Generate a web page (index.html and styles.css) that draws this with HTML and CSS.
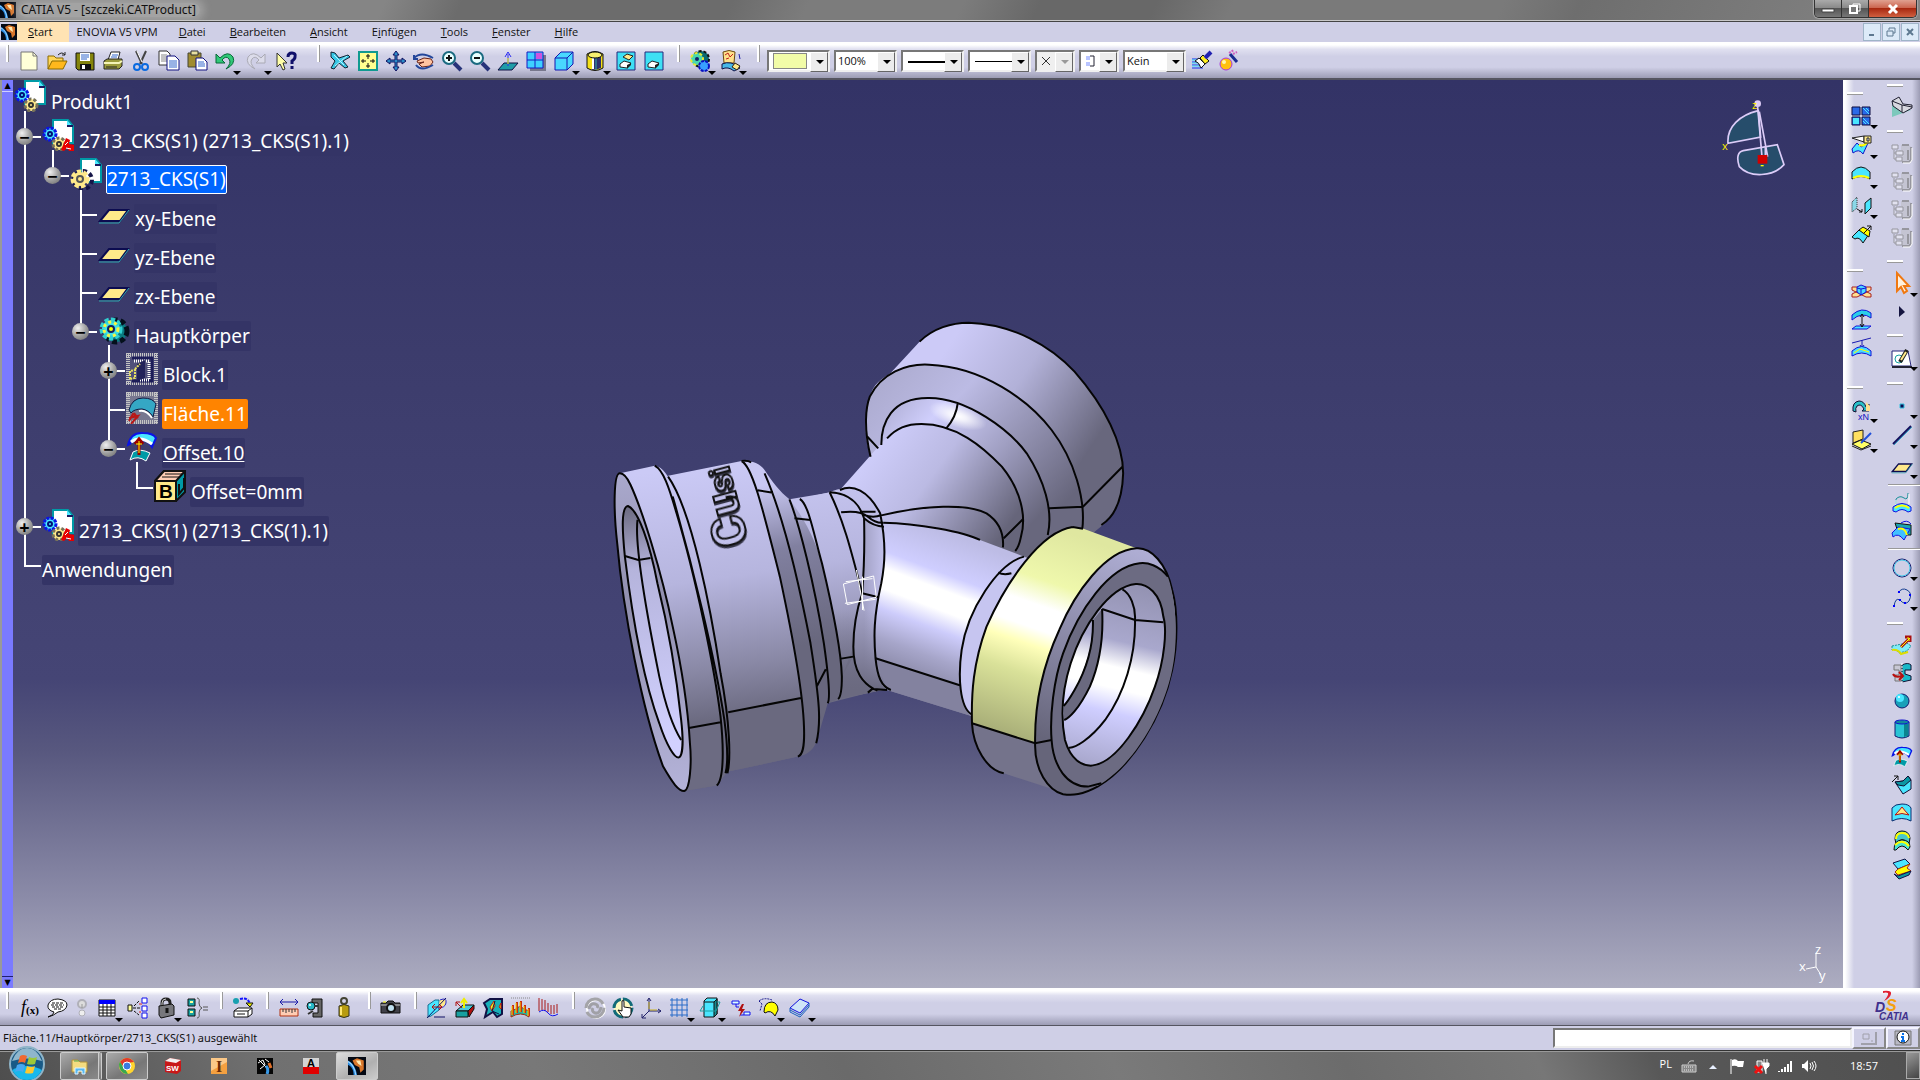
FILE: index.html
```html
<!DOCTYPE html>
<html lang="de">
<head>
    <meta charset="utf-8">
    <title>CATIA V5 - [szczeki.CATProduct]</title>
    <link rel="stylesheet" href="styles.css">
</head>
<body>
    <!-- shared symbols -->
    <svg class="defs" aria-hidden="true">
        <symbol id="catia" viewBox="0 0 16 16">
            <rect width="16" height="16" fill="#050a14"/>
            <path d="M0 3C4 5 7 9 8 16H5C5 11 3 8 0 7z" fill="#2a8be0"/>
            <path d="M0 4C4 6 6 10 7 16" stroke="#9fd8ff" fill="none"/>
            <path d="M4 3L8 1L14 3L14 11L11 14L10 9L6 7z" fill="#d9762a"/>
            <path d="M7 3L11 3L12 8L9 6z" fill="#ffe9b0"/>
        </symbol>
        <symbol id="doc" viewBox="0 0 32 32">
            <path d="M11 1H26L31 7V24H11z" fill="#fff" stroke="#009aa6" stroke-width="2"/>
            <path d="M25 1V8H31z" fill="#4de8ff"/>
            <path d="M25 7H31" stroke="#1a1a60" stroke-width="2"/>
        </symbol>
        <symbol id="product" viewBox="0 0 32 32">
            <use href="#doc"/>
            <circle cx="8" cy="15" r="6" fill="#49e6ff" stroke="#0a14e6" stroke-width="3" stroke-dasharray="3 1"/>
            <circle cx="8" cy="15" r="2" fill="#49e6ff" stroke="#00107a" stroke-width="2"/>
            <circle cx="17" cy="25" r="6" fill="#ffe98a" stroke="#77725a" stroke-width="3" stroke-dasharray="3 2"/>
            <circle cx="17" cy="25" r="2" fill="#ffe98a" stroke="#333" stroke-width="2"/>
        </symbol>
        <symbol id="component" viewBox="0 0 32 32">
            <use href="#product"/>
            <path d="M19 31L24 19L28 21L27 25L32 26V32H27L25 29L22 32z" fill="#e80000"/>
            <path d="M23 26L26 23M24 29L29 30" stroke="#fff" stroke-width="1"/>
        </symbol>
        <symbol id="part" viewBox="0 0 32 32">
            <use href="#doc"/>
            <circle cx="13" cy="22" r="9" fill="none" stroke="#151548" stroke-width="4" stroke-dasharray="4 3"/>
            <circle cx="10" cy="21" r="7" fill="#ffe98a" stroke="#ffe98a" stroke-width="5" stroke-dasharray="4 2"/>
            <circle cx="10" cy="21" r="3" fill="#ffe98a" stroke="#555" stroke-width="2"/>
        </symbol>
        <symbol id="plane" viewBox="0 0 32 32">
            <path d="M11 13H30L22 24H2z" fill="#ffe98a" stroke="#0c0c50" stroke-width="2"/>
            <path d="M1 26H21L31 13" fill="none" stroke="#2ea6ae"/>
        </symbol>
        <symbol id="offset" viewBox="0 0 32 32">
            <path d="M2 14Q5 1 17 2Q27 2 30 7L26 16Q22 9 15 9Q7 8 4 13z" fill="#49e6ff" stroke="#0a14e6" stroke-width="2"/>
            <path d="M5 11Q14 4 26 13" stroke="#fff" fill="none" stroke-width="3"/>
            <path d="M4 29L7 21Q14 17 24 22L20 30Q12 24 4 29z" fill="#009aa6" stroke="#fff"/>
            <path d="M13 24V9M9 13L13 8L17 13" stroke="#9c0000" stroke-width="3" fill="none"/>
            <path d="M13 22V10M10 13H16" stroke="#ff0"/>
        </symbol>
        <symbol id="cache" viewBox="0 0 22 22">
            <path d="M10 3H18L20 5V18L18 20H11V14H8V8H10z" fill="#c4c4d2"/>
            <path d="M11 20H18L20 18V5M11 3H18M17 8V18" fill="none" stroke="#96969e" stroke-width="2"/>
            <path d="M12 21H19L21 18V6" fill="none" stroke="#fff"/>
            <path d="M1 3H7V7H1zM5 9H12V13H5zM5 15H11V19H5zM3 8V17H5M3 11H5" fill="#e2e2f0" stroke="#96969e" stroke-width="1"/>
        </symbol>
    </svg>

    <header class="titlebar">
        <svg class="app-icon"><use href="#catia"/></svg>
        <span class="title">CATIA V5 - [szczeki.CATProduct]</span>
        <div class="window-buttons">
            <button class="min" aria-label="Minimieren"><svg viewBox="0 0 14 12"><path d="M1 6H13V9H1z" fill="#fff" stroke="#444"/></svg></button>
            <button class="max" aria-label="Wiederherstellen"><svg viewBox="0 0 14 12"><path d="M5 1H12V8H5z" fill="none" stroke="#fff" stroke-width="1"/><path d="M2 3H9V10H2z" fill="#777" stroke="#fff" stroke-width="2"/></svg></button>
            <button class="close" aria-label="Schließen"><svg viewBox="0 0 14 12"><path d="M3 2L11 10M11 2L3 10" stroke="#fff" stroke-width="3"/></svg></button>
        </div>
    </header>

    <nav class="menubar">
        <svg class="app-icon"><use href="#catia"/></svg>
        <button class="active"><u>S</u>tart</button>
        <button class="vpm">ENOVIA V5 VPM</button>
        <button><u>D</u>atei</button>
        <button><u>B</u>earbeiten</button>
        <button><u>A</u>nsicht</button>
        <button>E<u>i</u>nfügen</button>
        <button><u>T</u>ools</button>
        <button><u>F</u>enster</button>
        <button><u>H</u>ilfe</button>
        <div class="mdi-buttons">
            <button aria-label="Minimieren"><svg viewBox="0 0 12 12"><path d="M3 9H8" stroke="#5d7890" stroke-width="2"/></svg></button>
            <button aria-label="Wiederherstellen"><svg viewBox="0 0 12 12"><path d="M4 4V2H10V7H8M2 5H8V10H2z" fill="none" stroke="#5d7890" stroke-width="1"/></svg></button>
            <button aria-label="Schließen"><svg viewBox="0 0 12 12"><path d="M3 3L9 9M9 3L3 9" stroke="#5d7890" stroke-width="2"/></svg></button>
        </div>
    </nav>

    <div class="toolbar">
        <i class="grip"></i>
        <button class="tool" aria-label="Neu"><svg viewBox="0 0 22 22"><path d="M3 2H15L19 6V20H3z" fill="#ffffd8" stroke="#777"/><path d="M15 2V6H19" fill="none" stroke="#777"/></svg></button>
        <button class="tool" aria-label="Öffnen"><svg viewBox="0 0 22 22"><path d="M2 19V6H8L10 8H17V11" fill="#ffd75a" stroke="#8a6a00"/><path d="M2 19L6 11H21L17 19z" fill="#ffb81c" stroke="#8a6a00"/><path d="M12 5Q16 1 19 5M19 2V5H16" fill="none" stroke="#222"/></svg></button>
        <button class="tool" aria-label="Sichern"><svg viewBox="0 0 22 22"><path d="M2 3H20V20H4L2 18z" fill="#84840c" stroke="#111"/><path d="M6 3H16V11H6z" fill="#fff"/><path d="M7 5H15M7 7H15M7 9H13" stroke="#36c"/><path d="M6 14H17V20H6z" fill="#111"/><path d="M8 15H11V19H8z" fill="#fff"/></svg></button>
        <button class="tool" aria-label="Drucken"><svg viewBox="0 0 22 22"><path d="M6 10L9 2H18L16 10z" fill="#fff" stroke="#222"/><path d="M10 5H16M9 7H15" stroke="#36c"/><path d="M2 11L5 9H20V16L17 19H2z" fill="#9c9c3c" stroke="#222"/><path d="M2 13H17L20 11" fill="none" stroke="#f4f4b8" stroke-width="2"/><path d="M4 17H15" stroke="#222"/></svg></button>
        <button class="tool" aria-label="Ausschneiden"><svg viewBox="0 0 22 22"><path d="M6 1L12 14M16 1L10 14" stroke="#444" stroke-width="2"/><path d="M7 1L12 12" stroke="#fff"/><circle cx="7" cy="17" r="3" fill="none" stroke="#0a6ae0" stroke-width="2"/><circle cx="15" cy="17" r="3" fill="none" stroke="#0a6ae0" stroke-width="2"/></svg></button>
        <button class="tool" aria-label="Kopieren"><svg viewBox="0 0 22 22"><path d="M1 1H9L12 4V15H1z" fill="#fff" stroke="#333"/><path d="M3 5H9M3 7H9M3 9H9M3 11H9" stroke="#888"/><path d="M9 6H17L21 10V20H9z" fill="#fff" stroke="#111180"/><path d="M11 11H19M11 13H19M11 15H19M11 17H19" stroke="#36c"/></svg></button>
        <button class="tool" aria-label="Einfügen"><svg viewBox="0 0 22 22"><path d="M2 3H15V17H2z" fill="#a08c30" stroke="#443"/><path d="M5 1H12V5H5z" fill="#e8e0a0" stroke="#333"/><path d="M10 8H17L21 12V20H10z" fill="#fff" stroke="#111180"/><path d="M12 12H18M12 14H19M12 16H19" stroke="#36c"/></svg></button>
        <button class="tool more" aria-label="Widerrufen"><svg viewBox="0 0 22 22"><path d="M2 4V13H11L8 10Q12 5 15 9Q18 13 12 19Q22 14 19 7Q14 0 6 8z" fill="#30c878" stroke="#086838"/></svg></button>
        <button class="tool more" aria-label="Wiederholen"><svg viewBox="0 0 22 22"><path d="M20 4V13H11L14 10Q10 5 7 9Q4 13 10 19Q0 14 3 7Q8 0 16 8z" fill="#dcdcea" stroke="#aaaab4"/></svg></button>
        <button class="tool" aria-label="Direkthilfe"><svg viewBox="0 0 22 22"><path d="M1 3V17L4 14L7 20L9 19L7 13H11z" fill="#ffffa8" stroke="#333"/><path d="M12 7Q12 3 16 3Q20 3 19 7Q19 9 16 11V14M16 16V19" fill="none" stroke="#10106a" stroke-width="3"/></svg></button>
        <i class="grip wide"></i>
        <button class="tool" aria-label="Fliegen"><svg viewBox="0 0 22 22"><path d="M2 2L6 3L10 8L19 5L21 7L14 11L19 17L16 18L10 13L5 19L2 18L6 11L2 7z" fill="#39c7e6" stroke="#123"/><path d="M5 5L15 15M18 6L6 16" stroke="#b8f4ff"/></svg></button>
        <button class="tool" aria-label="Alles einpassen"><svg viewBox="0 0 22 22"><path d="M2 2H20V20H2z" fill="#ffff90" stroke="#109a90" stroke-width="2"/><path d="M11 4V9M9 6H13M11 18V13M9 16H13M4 11H9M6 9V13M18 11H13M16 9V13" stroke="#111" stroke-width="1"/></svg></button>
        <button class="tool" aria-label="Verschieben"><svg viewBox="0 0 22 22"><path d="M11 1L14 5H12V10H17V8L21 11L17 14V12H12V17H14L11 21L8 17H10V12H5V14L1 11L5 8V10H10V5H8z" fill="#2c8cc8" stroke="#101060"/></svg></button>
        <button class="tool" aria-label="Drehen"><svg viewBox="0 0 22 22"><path d="M4 11L11 8L18 9L20 12L17 16L9 17L6 14L11 12L5 13z" fill="#ffc3a0" stroke="#6a2418"/><path d="M1 5V9H5M1 8Q8 1 20 8M3 15Q8 22 20 15" fill="none" stroke="#23469a" stroke-width="2"/></svg></button>
        <button class="tool" aria-label="Vergrößern"><svg viewBox="0 0 22 22"><path d="M13 13L20 20" stroke="#27337a" stroke-width="4"/><circle cx="8" cy="8" r="6" fill="#e8ffff" stroke="#1a6a80" stroke-width="2"/><path d="M5 8H11M8 5V11" stroke="#111" stroke-width="2"/></svg></button>
        <button class="tool" aria-label="Verkleinern"><svg viewBox="0 0 22 22"><path d="M13 13L20 20" stroke="#27337a" stroke-width="4"/><circle cx="8" cy="8" r="6" fill="#e8ffff" stroke="#1a6a80" stroke-width="2"/><path d="M5 8H11" stroke="#111" stroke-width="2"/></svg></button>
        <button class="tool" aria-label="Senkrechte Ansicht"><svg viewBox="0 0 22 22"><path d="M7 13H21L15 20H1z" fill="#1e9ca8" stroke="#114"/><path d="M11 16V4M8 7L11 2L14 7" fill="none" stroke="#2a2af0"/><path d="M11 14V8" stroke="#ff0"/></svg></button>
        <button class="tool" aria-label="Mehrfachansicht"><svg viewBox="0 0 22 22"><path d="M5 5H21V21H5z" fill="#77778c"/><path d="M2 2H18V18H2z" fill="#3ed0ff" stroke="#1818c0"/><path d="M11 3H17V9H11z" fill="#cc54e0"/><path d="M2 10H18M10 2V18" stroke="#1818c0" stroke-width="1"/></svg></button>
        <button class="tool more" aria-label="Isometrische Ansicht"><svg viewBox="0 0 22 22"><path d="M2 8L8 2H20V14L14 20H2z" fill="#49d8ff" stroke="#1515b0"/><path d="M2 8H14V20M14 8L20 2" fill="none" stroke="#1515b0"/></svg></button>
        <button class="tool more" aria-label="Schattierung"><svg viewBox="0 0 22 22"><path d="M3 4V18Q11 23 19 18V4Q11 -1 3 4z" fill="#f4e018" stroke="#111"/><path d="M8 7H17V18Q13 20 8 20z" fill="#30306c"/><path d="M9 8V19" stroke="#fff" stroke-width="2"/><path d="M12 8V20" stroke="#3aa"/><ellipse cx="11" cy="5" rx="7" ry="3" fill="#f8f070" stroke="#111"/></svg></button>
        <button class="tool" aria-label="Verdecken/Anzeigen"><svg viewBox="0 0 22 22"><path d="M2 2H20V20H2z" fill="#3ee0f4" stroke="#27277a"/><path d="M8 7L12 4L18 6L14 10z" fill="#ffe98a" stroke="#222"/><path d="M5 14L9 11L16 13L12 18L5 17z" fill="#fff" stroke="#222"/><path d="M12 15L16 13V15L12 19z" fill="#222"/></svg></button>
        <button class="tool" aria-label="Sichtbaren Raum umschalten"><svg viewBox="0 0 22 22"><path d="M2 2H20V20H2z" fill="#3ee0f4" stroke="#27277a"/><path d="M5 14L9 11L16 13L12 18L5 17z" fill="#fff" stroke="#222"/><path d="M12 15L16 13V15L12 19z" fill="#222"/></svg></button>
        <i class="grip"></i>
        <button class="tool more" aria-label="Arbeitsumgebung"><svg viewBox="0 0 22 22"><circle cx="12" cy="9" r="8" fill="#0a6a70" stroke="#111" stroke-width="2" stroke-dasharray="3 2"/><circle cx="8" cy="9" r="6" fill="#48d8b0" stroke="#e8e830" stroke-width="2" stroke-dasharray="3 2"/><circle cx="8" cy="9" r="2" fill="#126"/><circle cx="15" cy="16" r="5" fill="#38a0ff" stroke="#0a10c0" stroke-width="2" stroke-dasharray="3 1"/></svg></button>
        <button class="tool more" aria-label="Katalog"><svg viewBox="0 0 22 22"><path d="M3 2Q9 -1 15 2L14 13H4z" fill="#ffe08a" stroke="#6a4a10"/><path d="M5 5L8 3L10 7L13 4M6 9L9 8" stroke="#c02020" fill="none"/><path d="M2 14Q11 10 20 18L14 21Q8 16 2 19z" fill="#48b8e8" stroke="#114"/><path d="M15 13L20 16L17 20L12 17z" fill="#ffe98a" stroke="#321"/><path d="M19 4L20 9" stroke="#22a"/></svg></button>
        <i class="grip"></i>
        <div class="combos">
            <div class="combo"><select aria-label="Farbe"><option></option></select><span class="swatch"></span></div>
            <div class="combo"><select aria-label="Transparenz"><option>100%</option></select></div>
            <div class="combo"><select aria-label="Linienstärke"><option></option></select><span class="line thick"></span></div>
            <div class="combo"><select aria-label="Linientyp"><option></option></select><span class="line"></span></div>
            <div class="combo small off"><select aria-label="Punktsymbol" disabled><option></option></select><svg class="mark" viewBox="0 0 12 12"><path d="M2 2L10 10M10 2L2 10" stroke="#333"/></svg></div>
            <div class="combo small"><select aria-label="Wiedergabe"><option></option></select><svg class="mark" viewBox="0 0 12 12"><path d="M2 1H6V5H2zM2 7H6V11H2z" fill="#b8c4ff"/><path d="M6 1H10V11H6" fill="none" stroke="#223"/></svg></div>
            <div class="combo"><select aria-label="Layer"><option>Kein</option></select></div>
        </div>
        <button class="tool" aria-label="Format übertragen"><svg viewBox="0 0 22 22"><path d="M1 9H12M1 12H12M1 15H12M1 18H12" stroke="#1030f0" stroke-width="1"/><path d="M1 10H12M1 13H12M1 16H12" stroke="#40e0f0"/><path d="M8 8L14 14L10 18Q8 12 4 11z" fill="#fff" stroke="#111"/><path d="M9 8L12 5L18 11L14 14z" fill="#ffee20" stroke="#111"/><path d="M14 8L20 2" stroke="#2020b0" stroke-width="4"/></svg></button>
        <button class="tool" aria-label="Material"><svg viewBox="0 0 22 22"><circle cx="7" cy="14" r="6" fill="#ffc010" stroke="#a838e0"/><circle cx="5" cy="12" r="2" fill="#fff6b0"/><path d="M11 4L18 12" stroke="#1a2a90" stroke-width="3"/><path d="M10 3L15 0M14 4L18 2" stroke="#d060c0" stroke-width="2" stroke-dasharray="2 1"/></svg></button>
    </div>

    <main class="workspace">
        <section class="viewport">
            <div class="scroller"><button aria-label="Nach oben">▲</button><button aria-label="Nach unten">▼</button></div>
            <svg class="scene" viewBox="0 80 1843 908">
                <defs>
                    <linearGradient id="flangeTop" gradientUnits="userSpaceOnUse" x1="880" y1="160" x2="1290" y2="400"><stop offset="0" stop-color="#cccaf7"/><stop offset=".45" stop-color="#b2b1d8"/><stop offset="1" stop-color="#68677d"/></linearGradient>
                    <linearGradient id="ring" gradientUnits="userSpaceOnUse" x1="760" y1="200" x2="1230" y2="560"><stop offset="0" stop-color="#aeadd2"/><stop offset=".3" stop-color="#bcbbe4"/><stop offset="1" stop-color="#67667c"/></linearGradient>
                    <linearGradient id="fillet" gradientUnits="userSpaceOnUse" x1="760" y1="300" x2="1160" y2="600"><stop offset="0" stop-color="#b5b4dc"/><stop offset=".2" stop-color="#d0cffc"/><stop offset=".6" stop-color="#a09fc2"/><stop offset="1" stop-color="#68677d"/></linearGradient>
                    <linearGradient id="neck" gradientUnits="userSpaceOnUse" x1="740" y1="390" x2="1090" y2="610"><stop offset="0" stop-color="#cdccf9"/><stop offset=".4" stop-color="#bbbae3"/><stop offset="1" stop-color="#66657a"/></linearGradient>
                    <linearGradient id="body" gradientUnits="userSpaceOnUse" x1="300" y1="460" x2="420" y2="1210"><stop offset="0" stop-color="#cbcaf6"/><stop offset=".45" stop-color="#b6b5de"/><stop offset=".8" stop-color="#8988a5"/><stop offset="1" stop-color="#6b6a80"/></linearGradient>
                    <linearGradient id="joint" gradientUnits="userSpaceOnUse" x1="690" y1="0" x2="745" y2="0"><stop offset="0" stop-color="#a3a2c6"/><stop offset="1" stop-color="#c4c3ee"/></linearGradient>
                    <linearGradient id="jointShade" gradientUnits="userSpaceOnUse" x1="0" y1="900" x2="0" y2="1140"><stop offset="0" stop-color="#6b6a80" stop-opacity="0"/><stop offset="1" stop-color="#6b6a80"/></linearGradient>
                    <linearGradient id="band" gradientUnits="userSpaceOnUse" x1="450" y1="520" x2="560" y2="1000"><stop offset="0" stop-color="#c9c8f3"/><stop offset=".4" stop-color="#8180a0"/><stop offset="1" stop-color="#68677d"/></linearGradient>
                    <linearGradient id="disc" gradientUnits="userSpaceOnUse" x1="60" y1="500" x2="200" y2="1440"><stop offset="0" stop-color="#a9a8cc"/><stop offset=".4" stop-color="#918fae"/><stop offset="1" stop-color="#b4b3d9"/></linearGradient>
                    <linearGradient id="bore" gradientUnits="userSpaceOnUse" x1="80" y1="600" x2="180" y2="1300"><stop offset="0" stop-color="#706f86"/><stop offset=".25" stop-color="#b5b4dc"/><stop offset="1" stop-color="#d2d1ff"/></linearGradient>
                    <linearGradient id="pipe" gradientUnits="userSpaceOnUse" x1="900" y1="665" x2="710" y2="1105"><stop offset="0" stop-color="#bdbce5"/><stop offset=".24" stop-color="#cfceff"/><stop offset=".34" stop-color="#fff"/><stop offset=".46" stop-color="#fff"/><stop offset=".58" stop-color="#cdccfb"/><stop offset=".75" stop-color="#a6a5c9"/><stop offset="1" stop-color="#7b7a95"/></linearGradient>
                    <linearGradient id="yellow" gradientUnits="userSpaceOnUse" x1="1280" y1="690" x2="1050" y2="1270"><stop offset="0" stop-color="#dfe7a0"/><stop offset=".25" stop-color="#eff8ac"/><stop offset=".37" stop-color="#fff"/><stop offset=".48" stop-color="#fff"/><stop offset=".56" stop-color="#ffffba"/><stop offset=".7" stop-color="#d9e199"/><stop offset="1" stop-color="#a8ae78"/></linearGradient>
                    <linearGradient id="hole" gradientUnits="userSpaceOnUse" x1="1400" y1="830" x2="1250" y2="1370"><stop offset="0" stop-color="#9493b3"/><stop offset=".3" stop-color="#a9a8cd"/><stop offset=".44" stop-color="#fff"/><stop offset=".55" stop-color="#fff"/><stop offset=".68" stop-color="#cfceff"/><stop offset="1" stop-color="#a5a4c8"/></linearGradient>
                    <linearGradient id="rim" gradientUnits="userSpaceOnUse" x1="1420" y1="730" x2="1200" y2="1300"><stop offset="0" stop-color="#aeadd3"/><stop offset=".5" stop-color="#8b8aa8"/><stop offset="1" stop-color="#66657a"/></linearGradient>
                    <radialGradient id="glow"><stop offset="0" stop-color="#fff"/><stop offset=".3" stop-color="#fff" stop-opacity=".8"/><stop offset="1" stop-color="#fff" stop-opacity="0"/></radialGradient>
                </defs>

                <g class="model" transform="translate(600 310) scale(.3827 .3333)">
                    <!-- rear flange -->
                    <path fill="url(#flangeTop)" d="M707 440C690 380 690 310 705 260C715 220 735 208 760 188L835 95C870 55 920 38 963 38C1080 42 1180 110 1240 185C1320 290 1367 400 1367 490C1365 570 1345 620 1292 665L1200 760L900 700z"/>
                    <path fill="url(#ring)" d="M707 440C688 350 695 290 705 260C735 190 800 160 860 164C1000 170 1120 270 1180 360C1240 450 1270 570 1260 660L1100 740z"/>
                    <path fill="#6b6a81" d="M1367 468L1262 590L1174 595V680L1260 660L1292 665C1345 620 1370 550 1367 468z"/>
                    <path fill="url(#fillet)" d="M735 405C735 340 760 262 860 264C960 264 1070 360 1115 430C1160 510 1185 600 1170 675L1085 740L800 600z"/>
                    <ellipse cx="935" cy="318" rx="80" ry="34" fill="url(#glow)" transform="rotate(22 935 318)"/>
                    <path fill="url(#neck)" d="M627 540L735 400C760 370 790 342 840 342C930 342 1000 410 1050 470C1100 540 1115 620 1100 680L1085 725L990 700L700 660z"/>
                    <path class="edge" d="M835 95C870 55 920 38 963 38C1080 42 1180 110 1240 185C1320 290 1367 400 1367 490C1365 570 1345 620 1310 645M707 440C688 350 695 290 705 260C735 190 800 160 860 164C1000 170 1120 270 1180 360C1240 450 1270 570 1260 660M735 405C735 340 760 262 860 264C960 264 1070 360 1115 430C1160 510 1185 600 1170 675M750 385C775 355 800 342 840 342C930 342 1000 410 1050 470C1100 540 1115 620 1100 680Q1095 710 1085 723M935 278C932 310 920 335 905 355M1367 468L1262 590L1174 595M697 378L727 415M1105 628L1055 685"/>

                    <!-- branch pipe -->
                    <path fill="url(#pipe)" d="M700 640L735 637C830 640 950 665 993 690L1108 740L1160 820L1000 1230L970 1218L750 1140L690 1130L662 1010z"/>
                    <path fill="#83829f" d="M720 1045L940 1126L970 1218L750 1140z"/>
                    <path fill="#c6c5f0" d="M1108 740C1040 760 960 900 945 1020C935 1100 940 1190 970 1218L1060 900L1160 760z"/>
                    <path class="edge" d="M732 617C850 585 960 580 1010 610C1050 640 1055 680 1053 712M740 638C830 640 950 665 993 690M1108 740C1040 760 960 900 945 1020C935 1100 940 1190 970 1213M1040 788Q1055 796 1075 790M720 1045L940 1126"/>

                    <!-- large socket -->
                    <path fill="url(#body)" d="M600 547C640 525 690 530 732 610C748 700 745 760 735 820C715 920 715 980 720 1045C725 1100 735 1130 750 1138L622 1167L560 1000z"/>
                    <path fill="url(#body)" d="M495 568L605 547C650 650 670 760 688 850C665 920 662 970 662 1010C662 1090 690 1120 710 1146L595 1180L500 900z"/>
                    <path fill="url(#joint)" d="M690 625Q715 650 742 650C748 720 745 760 735 820C715 920 715 980 720 1045C725 1100 735 1130 750 1138L715 1137C680 1120 662 1090 662 1010C662 970 670 920 688 850C692 780 692 720 690 625z"/>
                    <path fill="url(#jointShade)" d="M662 900H718C715 980 720 1045 725 1080C728 1110 740 1135 750 1138L622 1167L600 900z"/>
                    <path fill="url(#band)" d="M370 453C400 450 420 465 430 480C450 515 470 545 495 568L550 630C590 800 632 1000 632 1100L622 1167L595 1180C585 1220 575 1260 567 1290C560 1315 545 1335 517 1340L470 900z"/>
                    <path fill="url(#body)" d="M495 568L522 567L600 547C640 640 660 740 685 850Q662 930 662 1010L632 1100C628 1000 605 880 580 760C560 680 530 620 495 568z"/>
                    <path fill="url(#jointShade)" d="M600 860L685 850Q662 930 662 1010V1040L632 1100C628 1010 615 930 600 860z"/>
                    <path fill="url(#body)" d="M178 497L370 453C400 470 430 620 470 800C500 960 530 1140 533 1250C535 1310 530 1335 517 1340L335 1385L250 900z"/>
                    <path fill="#6a697f" d="M335 1207L525 1164C540 1240 532 1320 517 1340L335 1385z"/>
                    <path fill="url(#body)" d="M52 490L143 467C165 470 180 500 190 530C240 640 290 900 315 1090C340 1240 342 1350 333 1385L305 1427L220 1443z"/>
                    <path fill="#6c6b82" d="M232 1254L338 1225C344 1300 340 1370 333 1385L305 1427L220 1443z"/>
                    <path class="outlined" fill="url(#disc)" d="M52 490C35 490 35 600 45 700C60 900 110 1200 165 1370C190 1420 205 1443 220 1443C235 1440 240 1360 235 1300C230 1200 215 1080 190 950C160 780 110 600 80 525C70 500 60 490 52 490z"/>
                    <path class="outlined" fill="url(#bore)" d="M73 588C55 590 58 660 65 740C80 880 110 1100 155 1240C175 1310 195 1343 205 1343C217 1340 218 1290 212 1230C200 1100 180 960 150 820C130 700 100 600 73 588z"/>
                    <path class="edge" d="M98 630C90 700 120 900 155 1100C170 1180 190 1250 212 1290M65 738L100 750L132 744M143 467C165 480 180 530 200 610C250 800 300 1080 315 1220C325 1330 322 1410 305 1427M178 500C240 600 290 900 315 1090C340 1240 342 1350 333 1390M190 560C240 760 300 1040 325 1230C335 1320 335 1360 328 1390M370 453C400 470 430 620 470 800C500 960 530 1140 533 1250C535 1310 530 1335 517 1340M370 453Q385 450 395 457M430 490C480 620 520 820 550 1000C575 1180 578 1240 565 1300M495 568C520 640 560 820 585 1000C600 1120 600 1170 595 1180M522 567C545 580 560 680 580 760C605 880 630 1020 632 1100C632 1140 630 1160 622 1167M600 547C640 640 660 740 685 850M412 541L452 548M508 625L550 630M335 1207L525 1164M232 1254L315 1237M567 1128L590 1078M630 1046L662 1040"/>
                    <path class="edge" d="M627 540C660 522 700 540 732 610C748 700 745 760 735 820C715 920 715 980 720 1045C725 1100 735 1130 760 1140M690 625C692 720 690 780 685 850C665 920 662 970 662 1010C662 1090 690 1120 715 1137L750 1140M600 547C660 550 680 590 690 625M630 607Q680 600 700 620T740 638M680 605H720M690 625Q715 650 742 650M690 615Q715 625 735 615M685 850L728 862M700 1148L712 1136L725 1142"/>

                    <!-- small flange, selected face in yellow -->
                    <path fill="#74738b" d="M972 1240C975 1310 1010 1380 1055 1390L1190 1440L1180 1290L1137 1300z"/>
                    <path fill="url(#yellow)" d="M1235 651L1260 655L1402 715C1320 720 1240 850 1200 960C1160 1060 1135 1180 1137 1300L972 1240C970 1150 975 1060 1010 950C1060 820 1150 665 1235 651z"/>
                    <path class="outlined" fill="url(#rim)" d="M1402 715C1440 712 1480 760 1495 840C1510 900 1510 1000 1495 1080C1470 1220 1390 1370 1300 1430C1260 1455 1235 1457 1210 1453C1170 1440 1135 1380 1137 1300C1135 1180 1160 1060 1200 960C1240 850 1320 720 1402 715z"/>
                    <path fill="#6c6b82" d="M1484 800C1460 765 1430 757 1410 760C1330 770 1250 900 1210 1030C1185 1110 1175 1220 1180 1290C1185 1370 1220 1430 1275 1430L1300 1428C1390 1370 1470 1220 1495 1080C1510 1000 1508 880 1484 800z"/>
                    <path class="outlined" fill="url(#hole)" d="M1400 822C1330 830 1260 950 1230 1060C1205 1150 1205 1230 1215 1290C1230 1350 1260 1368 1285 1367C1350 1360 1420 1230 1450 1130C1475 1050 1482 960 1472 920C1465 850 1430 820 1400 822z"/>
                    <path fill="#6a697f" d="M1288 930L1312 897C1315 960 1310 1050 1280 1130C1250 1200 1225 1225 1213 1230L1211 1188C1230 1170 1290 1050 1288 930z"/>
                    <path class="edge" d="M1235 651C1150 665 1060 820 1010 950C975 1060 970 1150 972 1240C975 1310 1010 1380 1055 1390M1235 651L1262 656M972 1240L1137 1300L1180 1290M1484 800C1460 765 1430 757 1410 760C1330 770 1250 900 1210 1030C1185 1110 1175 1220 1180 1290C1185 1370 1220 1430 1275 1430L1310 1420M1365 838C1385 850 1400 890 1398 930C1400 1040 1370 1150 1320 1230C1280 1290 1240 1315 1225 1313M1312 897L1398 930L1472 937M1312 897C1315 960 1310 1050 1280 1130C1250 1200 1225 1225 1213 1230M1288 930C1290 1010 1270 1080 1240 1140Q1220 1180 1211 1188"/>
                    <path class="axis" d="M636 822L715 798L722 862L646 884zM642 815L712 806M640 880L720 868M670 780L690 902M686 800V900"/>
                </g>
                <text class="engraving" transform="translate(749 542) rotate(-105)"><tspan class="e1">C</tspan><tspan class="e2">u</tspan><tspan class="e3">s</tspan><tspan class="e4">i</tspan></text>

                <!-- compass -->
                <g transform="translate(1700 0) scale(.3333)">
                    <path d="M175 332C120 345 80 380 84 430L182 411zM232 434L252 494C220 530 150 535 118 500C108 470 115 455 130 452z" fill="#264d6b" stroke="#dcccf8" stroke-width="5"/>
                    <path d="M172 310L186 470M178 335L203 470M196 440V470" stroke="#dcccf8" stroke-width="5" fill="none"/>
                    <circle cx="173" cy="311" r="10" fill="#dcccf8"/>
                    <path d="M173 465H202V491H173z" fill="#d00000"/>
                    <path d="M182 497H191" stroke="#ff0" stroke-width="4"/>
                </g>
                <text class="compass-label" x="1722" y="150">x</text>
                <text class="compass-label" x="1752" y="109">z</text>
                <path class="axis" d="M1816 967V953M1816 967L1806 969M1816 967L1821 975"/>
                <text class="axis-label" x="1815" y="954">z</text>
                <text class="axis-label" x="1799" y="971">x</text>
                <text class="axis-label" x="1819" y="980">y</text>
            </svg>

            <ul class="tree">
                <li>
                    <div class="row"><svg><use href="#product"/></svg><span>Produkt1</span></div>
                    <ul>
                        <li>
                            <button class="handle" aria-label="Reduzieren">−</button>
                            <div class="row"><svg><use href="#component"/></svg><span>2713_CKS(S1) (2713_CKS(S1).1)</span></div>
                            <ul>
                                <li>
                                    <button class="handle" aria-label="Reduzieren">−</button>
                                    <div class="row"><svg><use href="#part"/></svg><span class="edited">2713_CKS(S1)</span></div>
                                    <ul>
                                        <li><div class="row"><svg><use href="#plane"/></svg><span>xy-Ebene</span></div></li>
                                        <li><div class="row"><svg><use href="#plane"/></svg><span>yz-Ebene</span></div></li>
                                        <li><div class="row"><svg><use href="#plane"/></svg><span>zx-Ebene</span></div></li>
                                        <li>
                                            <button class="handle" aria-label="Reduzieren">−</button>
                                            <div class="row"><svg viewBox="0 0 32 32"><circle cx="18" cy="17" r="11" fill="#0a7a80" stroke="#04101c" stroke-width="5" stroke-dasharray="5 3"/><circle cx="13" cy="15" r="9" fill="#3fe0e8" stroke="#30d0d0" stroke-width="5" stroke-dasharray="4 2"/><circle cx="13" cy="15" r="7" fill="none" stroke="#f8f440" stroke-width="3" stroke-dasharray="3 3"/><circle cx="13" cy="15" r="3" fill="#ff0" stroke="#102060" stroke-width="2"/></svg><span>Hauptkörper</span></div>
                                            <ul>
                                                <li>
                                                    <button class="handle" aria-label="Erweitern">+</button>
                                                    <div class="row"><svg viewBox="0 0 32 32"><rect width="32" height="32" fill="#50507a"/><path d="M2 0V32M30 0V32M0 2H32M0 30H32" stroke="#c4c4c4" stroke-width="4" stroke-dasharray="1 1"/><path d="M6 5H26V28H6" fill="none" stroke="#1c1c58" stroke-width="3"/><path d="M8 8H23V27H14" fill="none" stroke="#fff" stroke-width="3" stroke-dasharray="1 1"/><path d="M11 11L19 7V25L11 28z" fill="#22225a"/><path d="M4 26V18L9 17V25zM9 16L14 11" fill="none" stroke="#e8e060" stroke-width="2" stroke-dasharray="2 1"/></svg><span>Block.1</span></div>
                                                </li>
                                                <li><div class="row"><svg viewBox="0 0 32 32"><rect width="32" height="32" fill="#77778f"/><path d="M2 0V32M30 0V32M0 2H32M0 30H32" stroke="#c4c4c4" stroke-width="4" stroke-dasharray="1 1"/><path d="M3 18Q6 6 17 6Q27 6 30 12L27 25Q23 18 16 17Q8 17 5 21z" fill="#35a7c4" stroke="#101840"/><path d="M13 19Q20 17 26 26" stroke="#fff" fill="none" stroke-width="2"/><path d="M3 29L7 22L12 26L8 21M3 26L12 24L5 32" stroke="#b81818" stroke-width="2" fill="none"/></svg><span class="selected">Fläche.11</span></div></li>
                                                <li>
                                                    <button class="handle" aria-label="Reduzieren">−</button>
                                                    <div class="row"><svg><use href="#offset"/></svg><span class="current">Offset.10</span></div>
                                                    <ul>
                                                        <li><div class="row"><svg viewBox="0 0 32 32"><path d="M1 11L10 1H31V22L22 31" fill="#009aa6" stroke="#111" stroke-width="2"/><path d="M1 11L10 1H31L22 11z" fill="#ffcdb4" stroke="#111" stroke-width="2"/><path d="M8 7H25M11 4H28" stroke="#111"/><path d="M1 11H22V31H1z" fill="#ffe98a" stroke="#111" stroke-width="2"/><path d="M25 14V24L30 18V8" fill="none" stroke="#111" stroke-width="2"/><text x="5" y="28" class="cube-letter">B</text></svg><span>Offset=0mm</span></div></li>
                                                    </ul>
                                                </li>
                                            </ul>
                                        </li>
                                    </ul>
                                </li>
                            </ul>
                        </li>
                        <li>
                            <button class="handle" aria-label="Erweitern">+</button>
                            <div class="row"><svg><use href="#component"/></svg><span>2713_CKS(1) (2713_CKS(1).1)</span></div>
                        </li>
                        <li><div class="row"><span class="bare">Anwendungen</span></div></li>
                    </ul>
                </li>
            </ul>
        </section>

        <aside class="sidebar">
            <div class="column">
                <i class="grip top"></i>
                <button class="tool more" aria-label="Zusammenfügen"><svg viewBox="0 0 22 22"><path d="M1 2H9V10H1zM11 2H19V10H11zM1 12H9V20H1zM11 12H19V20H11z" fill="#2a6ae8" stroke="#0a0a40"/><path d="M2 13H8V19H2z" fill="#49e6ff"/><path d="M12 3L18 9M15 3L18 6M12 13L18 19M12 16L15 19" stroke="#49e6ff" stroke-width="1"/></svg></button>
                <button class="tool more" aria-label="Trennen"><svg viewBox="0 0 22 22"><path d="M1 14L6 8L10 12L17 8L12 19Q8 13 2 18z" fill="#49e6ff" stroke="#1212c8" stroke-width="1"/><path d="M8 10Q12 12 17 7" stroke="#ff0" fill="none" stroke-width="2"/><path d="M1 3L13 1V7z" fill="#fff" stroke="#222"/><path d="M13 1H20V8H13z" fill="#ffe98a" stroke="#222"/><path d="M16 3H18V6H16z" fill="#fff" stroke="#222"/></svg></button>
                <button class="tool more" aria-label="Begrenzung"><svg viewBox="0 0 22 22"><path d="M1 14V7Q10 -3 19 7V14Q10 9 1 14z" fill="#49e6ff" stroke="#111"/><path d="M2 13Q10 9 18 13" fill="none" stroke="#ff0" stroke-width="2"/></svg></button>
                <button class="tool more" aria-label="Verschieben"><svg viewBox="0 0 22 22"><path d="M1 7L6 2V13L1 17z" fill="#8ad8e8" stroke="#333" stroke-dasharray="1 1"/><path d="M14 8L20 3V13L14 19z" fill="#49e6ff" stroke="#111"/><path d="M6 14L11 17M11 14V17H8" stroke="#111" fill="none" stroke-width="1"/></svg></button>
                <button class="tool" aria-label="Extrapolieren"><svg viewBox="0 0 22 22"><path d="M1 13L8 6L18 10L12 19Q8 12 4 15z" fill="#49e6ff" stroke="#111"/><path d="M8 6L12 3L19 7L18 13L12 9z" fill="#ff0" stroke="#111"/><path d="M13 9L20 2M16 2H20V6" stroke="#111" stroke-width="1" fill="none"/></svg></button>
                <i class="grip far"></i>
                <button class="tool" aria-label="Verbindung"><svg viewBox="0 0 22 22"><path d="M1 6H6L20 13V16H15L1 9zM20 6H15L1 13V16H6L20 9z" fill="#ffdf90" stroke="#a82020"/><path d="M6 6L10 4L15 6V11L10 14L6 11z" fill="#49d8ff" stroke="#1212d8"/><path d="M6 7L10 8L15 7M10 8V14" stroke="#1212d8" fill="none"/></svg></button>
                <button class="tool" aria-label="Dicke Fläche"><svg viewBox="0 0 22 22"><path d="M1 6Q11 -3 20 4V9Q11 2 1 11z" fill="#29cfe8" stroke="#1212d8"/><path d="M5 17H20L16 20H1z" fill="#49e6ff" stroke="#1212d8"/><path d="M11 5V18M9 8L11 5L13 8M9 15L11 18L13 15" stroke="#111" fill="none" stroke-width="1"/></svg></button>
                <button class="tool" aria-label="Aufmaßfläche"><svg viewBox="0 0 22 22"><path d="M1 6L20 1M11 3V10M9 8L11 11L13 8" stroke="#1a1ab0" fill="none"/><path d="M1 19V14Q11 5 20 14V19Q11 13 1 19z" fill="#49d8ff" stroke="#1212d8"/><path d="M3 16L9 12L18 15" stroke="#ff0" fill="none"/></svg></button>
                <i class="grip farther"></i>
                <button class="tool more" aria-label="Objekt wiederholen"><svg viewBox="0 0 22 22"><path d="M2 12Q1 3 8 2Q13 2 15 8L18 5V12H11L13 10Q10 4 6 7Q4 9 5 13z" fill="#29c0c8" stroke="#113"/><path d="M15 3L19 7V12H15z" fill="#ffdf90"/><text x="7" y="21" class="mini">xN</text></svg></button>
                <button class="tool more" aria-label="Powercopy"><svg viewBox="0 0 22 22"><path d="M2 3L12 1V10L2 14z" fill="#ffe060" stroke="#222"/><path d="M1 15L10 11L20 15L11 20z" fill="#ff6" stroke="#111" stroke-width="1"/><path d="M1 17L10 21L20 17" fill="none" stroke="#222"/><path d="M10 14L20 4" stroke="#2050d8" stroke-width="2"/></svg></button>
            </div>
            <div class="column">
                <i class="grip"></i>
                <button class="tool" aria-label="Schnitt"><svg viewBox="0 0 22 22"><path d="M1 5V21L20 14L8 11z" fill="#7cc8bc"/><path d="M1 5L8 1L12 8L21 9V12L12 17L2 10zM1 5L11 9V16M11 9L21 11" fill="#d8d8e0" stroke="#223"/></svg></button>
                <i class="grip"></i>
                <button class="tool" disabled aria-label="Cache 1"><svg><use href="#cache"/></svg></button>
                <button class="tool" disabled aria-label="Cache 2"><svg><use href="#cache"/></svg></button>
                <button class="tool" disabled aria-label="Cache 3"><svg><use href="#cache"/></svg></button>
                <button class="tool" disabled aria-label="Cache 4"><svg><use href="#cache"/></svg></button>
                <i class="grip"></i>
                <button class="tool" aria-label="Auswählen"><svg viewBox="0 0 22 22"><path d="M6 1V19L10 15L13 21L16 19L13 14H18z" fill="#fff1dd" stroke="#f07810" stroke-width="2"/></svg><b class="arrow"></b></button>
                <button class="tool" aria-label="Auswahlfilter"><svg viewBox="0 0 22 22"><path d="M8 6L14 12L8 17z" fill="#151540"/></svg></button>
                <i class="grip"></i>
                <button class="tool more" aria-label="Skizze"><svg viewBox="0 0 22 22"><path d="M1 4H17L20 19H1z" fill="#fff" stroke="#27277a"/><path d="M1 20H21" stroke="#223" stroke-width="2"/><circle cx="8" cy="12" r="4" fill="none" stroke="#18a0a0"/><path d="M9 15L16 3" stroke="#222" stroke-width="4"/><path d="M10 13L15 5" stroke="#ffe98a" stroke-width="2"/></svg></button>
                <i class="grip"></i>
                <button class="tool more" aria-label="Punkt"><svg viewBox="0 0 22 22"><path d="M9 9H13V13H9z" fill="#0c0c50" stroke="#30c0e0"/></svg></button>
                <button class="tool more" aria-label="Linie"><svg viewBox="0 0 22 22"><path d="M3 20L21 2" stroke="#3ac"/><path d="M2 19L20 1" stroke="#10105c" stroke-width="2"/></svg></button>
                <button class="tool more" aria-label="Ebene"><svg viewBox="0 0 32 32"><use href="#plane"/></svg></button>
                <hr>
                <button class="tool" aria-label="Projektion"><svg viewBox="0 0 22 22"><path d="M5 12V7Q9 3 13 6T17 1" fill="none" stroke="#189098" stroke-width="1"/><path d="M18 2V12M5 8V13" stroke="#fff"/><path d="M2 19V15Q11 8 20 15V19L17 20Q11 15 5 20z" fill="#49e6ff" stroke="#1212e0" stroke-width="1"/><path d="M4 16Q11 11 18 16" stroke="#ff0" fill="none" stroke-width="2"/></svg></button>
                <button class="tool" aria-label="Verschneidung"><svg viewBox="0 0 22 22"><path d="M4 3L20 5V15H8z" fill="#18a8b0" stroke="#111"/><path d="M1 13L7 7L19 9L13 20Q7 12 2 17z" fill="#40c0ff" stroke="#1212e0"/><path d="M7 9Q14 7 16 15" stroke="#ff0" fill="none" stroke-width="2"/><path d="M10 3Q16 -1 20 4" stroke="#1212e0" fill="none" stroke-width="1"/></svg></button>
                <hr>
                <button class="tool more" aria-label="Kreis"><svg viewBox="0 0 22 22"><circle cx="11" cy="11" r="9" fill="none" stroke="#16166c" stroke-width="1"/><circle cx="11" cy="11" r="8" fill="none" stroke="#40c8e8"/></svg></button>
                <button class="tool more" aria-label="Spline"><svg viewBox="0 0 22 22"><path d="M3 20Q4 10 9 13Q14 19 18 14Q22 6 16 3Q11 0 7 6" fill="none" stroke="#143c90" stroke-width="1"/><path d="M2 19H4M8 13H10M13 16H15M18 8H20M7 5H9" stroke="#00f" stroke-width="2"/></svg></button>
                <i class="grip"></i>
                <button class="tool" aria-label="Extrudieren"><svg viewBox="0 0 22 22"><path d="M1 12L16 9L20 12L16 17L8 19Q5 15 1 16z" fill="#80ecf8" stroke="#189098" stroke-dasharray="2 1"/><path d="M1 16Q7 15 10 20L17 18" stroke="#dd0" stroke-width="2" fill="none"/><path d="M10 13L18 5M14 3H19V8" stroke="#a81010" stroke-width="3" fill="none"/><path d="M10 13L19 4M16 4H18V7" stroke="#ff0" fill="none"/></svg></button>
                <button class="tool" aria-label="Drehfläche"><svg viewBox="0 0 22 22"><path d="M3 3H10V19H4V13H8V8H3z" fill="#c8c8d4" stroke="#777"/><path d="M11 3Q17 0 20 3V8H14V12L20 14V18L11 20z" fill="#18b8c8" stroke="#113"/><path d="M11 1V21" stroke="#fff" stroke-dasharray="2 1"/><path d="M2 12Q4 16 11 14M8 10L12 14L8 18" stroke="#b81010" stroke-width="2" fill="none"/></svg></button>
                <button class="tool" aria-label="Kugel"><svg viewBox="0 0 22 22"><circle cx="11" cy="11" r="7" fill="#18a0b8" stroke="#101c70"/><circle cx="9" cy="8" r="4" fill="#49e6ff"/><circle cx="8" cy="7" r="1" fill="#fff"/></svg></button>
                <button class="tool" aria-label="Zylinder"><svg viewBox="0 0 22 22"><path d="M4 4V18Q11 22 18 18V4z" fill="#29c4d4" stroke="#101c70"/><path d="M13 6H17V18L13 19z" fill="#0c8490"/><ellipse cx="11" cy="4" rx="7" ry="2" fill="#12889a" stroke="#1212d0"/></svg></button>
                <button class="tool" aria-label="Offset"><svg viewBox="0 0 32 32"><use href="#offset"/></svg></button>
                <button class="tool" aria-label="Translation"><svg viewBox="0 0 22 22"><path d="M4 8L12 7L17 2L20 6V15L12 20z" fill="#49e6ff" stroke="#113"/><path d="M4 8L12 7L17 2L20 6L13 12L7 11z" fill="#0c98a4" stroke="#113"/><path d="M1 8L7 2M3 2H7V6" stroke="#111" fill="none"/></svg></button>
                <button class="tool" aria-label="Füllen"><svg viewBox="0 0 22 22"><path d="M1 19V6Q4 2 11 2T20 6V19Q11 14 1 19z" fill="#49e6ff" stroke="#0c2c70" stroke-width="1"/><path d="M4 13Q8 9 11 5Q14 9 18 13Q11 10 4 13z" fill="#ffe880" stroke="#b81010" stroke-width="1"/></svg></button>
                <button class="tool" aria-label="Mehrfachschnitt"><svg viewBox="0 0 22 22"><path d="M4 9Q4 1 11 1T19 8L18 14Q11 5 5 14z" fill="#49c8c8" stroke="#111"/><path d="M5 9Q5 3 11 3T18 8" fill="none" stroke="#ff0" stroke-width="2"/><path d="M3 20Q3 10 11 10T19 17L17 20Q11 12 5 20z" fill="#49e6d0" stroke="#111"/><path d="M4 15Q11 8 18 16" fill="none" stroke="#ff0" stroke-width="2"/></svg></button>
                <button class="tool" aria-label="Übergang"><svg viewBox="0 0 22 22"><path d="M2 5L14 1L19 6L7 11z" fill="#49e6ff" stroke="#114"/><path d="M7 11L19 6L16 10L20 13L7 17L4 14z" fill="#ff0" stroke="#a83010"/><path d="M3 16L7 18L20 13L18 17L8 21z" fill="#0c98a4" stroke="#114"/></svg></button>
            </div>
        </aside>
    </main>

    <div class="toolbar bottom">
        <i class="grip"></i>
        <button class="tool" aria-label="Formel"><svg viewBox="0 0 22 22"><text x="3" y="16" class="fx">f</text><text x="8" y="17" class="fx-arg">(x)</text></svg></button>
        <button class="tool" aria-label="Kommentar"><svg viewBox="0 0 22 22"><path d="M8 15Q1 13 2 8Q4 2 12 2Q21 3 21 8Q20 14 12 15Q7 19 2 20Q8 18 8 15z" fill="#fff" stroke="#111"/><path d="M6 6H17M5 8H18M6 10H18M8 12H15" stroke="#111" stroke-dasharray="3 1"/></svg></button>
        <button class="tool slim" disabled aria-label="Prüfung"><svg viewBox="0 0 22 22"><circle cx="8" cy="7" r="4" fill="#ddd" stroke="#b0b0b8" stroke-width="2"/><path d="M8 7V11" stroke="#999"/><circle cx="8" cy="16" r="3" fill="#eee" stroke="#b0b0b8"/></svg></button>
        <button class="tool more" aria-label="Konstruktionstabelle"><svg viewBox="0 0 22 22"><path d="M3 3H19V19H3z" fill="#fff" stroke="#111"/><path d="M3 3H19V7H3z" fill="#00f"/><path d="M3 10H19M3 13H19M3 16H19M7 7V19M11 7V19M15 7V19" stroke="#111"/></svg></button>
        <button class="tool" aria-label="Beziehungen"><svg viewBox="0 0 22 22"><path d="M1 8H5V14H1z" fill="#ff9" stroke="#111"/><path d="M15 1H20V6H15zM15 9H20V14H15zM15 16H20V21H15z" fill="#fff" stroke="#11e"/><path d="M7 9L12 4M6 11H13M7 14L12 18" stroke="#111" stroke-dasharray="3 1"/><path d="M12 7H15M12 15H14" stroke="#e02020"/></svg></button>
        <button class="tool more" aria-label="Sperren"><svg viewBox="0 0 22 22"><path d="M7 10V6Q7 2 11 2T15 6V10" fill="none" stroke="#222" stroke-width="3"/><path d="M7 9V6Q7 2 11 2" fill="none" stroke="#ccc"/><path d="M4 9L17 7L19 9V18L6 21L4 18z" fill="#77777c" stroke="#111"/><path d="M12 11V16" stroke="#111" stroke-width="3"/></svg></button>
        <button class="tool" aria-label="Äquivalente Abmessungen"><svg viewBox="0 0 22 22"><path d="M2 2H9V9H2zM2 12H9V19H2z" fill="#18a0a0" stroke="#111"/><path d="M4 4H7V6H4zM4 14H7V16H4z" fill="#ff9"/><path d="M11 1Q14 1 13 6Q13 10 16 11Q13 12 13 16Q14 21 11 21M17 10H22M17 13H22" fill="none" stroke="#555"/></svg></button>
        <i class="grip"></i>
        <button class="tool" aria-label="Generieren"><svg viewBox="0 0 22 22"><circle cx="4" cy="4" r="3" fill="#18a0b0"/><path d="M8 2Q16 0 18 7" fill="none" stroke="#11f" stroke-width="2" stroke-dasharray="3 1"/><path d="M14 6H21L18 10z" fill="#ee0" stroke="#111"/><path d="M2 14L6 11H20V17L16 20H2zM2 14H16V20M16 14L20 11M5 17H13" fill="#fff" stroke="#111"/></svg></button>
        <i class="grip"></i>
        <button class="tool" aria-label="Messen zwischen"><svg viewBox="0 0 22 22"><path d="M2 5H20M5 2L2 5L5 8M17 2L20 5L17 8" fill="none" stroke="#1a1aa8"/><path d="M2 12H20V19H2z" fill="#ffcdb4" stroke="#b03010"/><path d="M5 12V15M8 12V16M11 12V15M14 12V16M17 12V15" stroke="#333"/></svg></button>
        <button class="tool" aria-label="Element messen"><svg viewBox="0 0 22 22"><path d="M6 2H16V20H7V16H12V6H6z" fill="#666" stroke="#111"/><circle cx="5" cy="9" r="4" fill="#28b8c8" stroke="#111"/><circle cx="4" cy="8" r="1" fill="#fff"/><path d="M2 17L7 14M9 9H12" stroke="#333" stroke-width="2"/></svg></button>
        <button class="tool" aria-label="Trägheit messen"><svg viewBox="0 0 22 22"><circle cx="10" cy="4" r="3" fill="none" stroke="#443" stroke-width="2"/><path d="M5 9Q10 6 15 9V19Q10 22 5 19z" fill="#b89c10" stroke="#332"/><path d="M7 10V18" stroke="#ffe870" stroke-width="2"/></svg></button>
        <i class="grip"></i>
        <button class="tool" aria-label="Aufnahme"><svg viewBox="0 0 22 22"><path d="M1 6H6L8 4H13L15 6H20V16H1z" fill="#404048" stroke="#111"/><path d="M1 8H20" stroke="#ccc"/><circle cx="11" cy="11" r="4" fill="#c0e0f0" stroke="#111" stroke-width="2"/><path d="M3 5H6" stroke="#ff0"/></svg></button>
        <i class="grip"></i>
        <button class="tool" aria-label="Verbindungsprüfung"><svg viewBox="0 0 22 22"><path d="M2 20V8L9 3H13V13L5 19z" fill="#49e6ff" stroke="#1a6a90"/><path d="M14 3Q21 0 20 6Q19 11 12 11" fill="#ffe98a" stroke="#22c"/><path d="M6 10H16M9 7L6 10L9 13M13 7L16 10L13 13" stroke="#b01010" fill="none" stroke-width="1"/><path d="M1 21L20 1M8 20H19" stroke="#116"/></svg></button>
        <button class="tool" aria-label="Auszugsschräge"><svg viewBox="0 0 22 22"><path d="M2 14L9 8H20L14 14z" fill="#49c8d8" stroke="#111"/><path d="M2 14H14V20H2z" fill="#18a0a0" stroke="#111"/><path d="M14 14L20 8V12L15 20z" fill="#b01010" stroke="#111"/><path d="M10 11V3M7 6L10 2L13 6" stroke="#ee0" stroke-width="2" fill="none"/><path d="M8 11L2 5M2 9V5H6" stroke="#b01010" stroke-width="1" fill="none"/></svg></button>
        <button class="tool" aria-label="Flächenkrümmung"><svg viewBox="0 0 22 22"><path d="M2 6L8 2L20 2V17L15 20L11 15L3 20L5 12z" fill="#18b0b8" stroke="#114" stroke-width="2"/><path d="M8 10L12 4L13 9L10 14zM17 10L19 6V12z" fill="#ee2" stroke="#c02010"/><path d="M13 4L10 14L17 17" stroke="#114" fill="none"/></svg></button>
        <button class="tool" aria-label="Stacheln"><svg viewBox="0 0 22 22"><path d="M1 20V14L6 12L10 9L14 12L19 14V20Q11 14 1 20z" fill="#28b0a0" stroke="#a03010"/><path d="M3 18V8M7 16V5M11 15V4M15 16V8M19 19V11" stroke="#c83010" stroke-width="2"/><path d="M2 18V9M6 16V6M10 15V5M14 16V9M18 19V12" stroke="#fd0" stroke-width="1"/><path d="M1 1H21" stroke="#888" stroke-dasharray="1 1"/></svg></button>
        <button class="tool" aria-label="Kurvenkrümmung"><svg viewBox="0 0 22 22"><path d="M1 1V14M4 2V13M7 3V14M10 6V15M13 8V17M16 8V17M19 7V16" stroke="#a81818"/><path d="M1 15Q6 11 10 16T20 17" stroke="#11e" fill="none" stroke-width="1"/></svg></button>
        <i class="grip"></i>
        <button class="tool" disabled aria-label="Aktualisieren"><svg viewBox="0 0 22 22"><circle cx="12" cy="12" r="9" fill="none" stroke="#fff" stroke-width="2"/><circle cx="11" cy="11" r="9" fill="none" stroke="#a4a4a8" stroke-width="3" stroke-dasharray="24 4"/><path d="M5 12Q6 6 11 7Q15 8 13 11M17 10Q16 17 11 16Q7 14 9 11" fill="none" stroke="#a0a0a6" stroke-width="3"/></svg></button>
        <button class="tool" aria-label="Manuell aktualisieren"><svg viewBox="0 0 22 22"><circle cx="11" cy="11" r="9" fill="#fff9c0" stroke="#126a78" stroke-width="3" stroke-dasharray="12 2"/><path d="M10 4Q12 2 12 5V10L19 11V17L17 20H11L6 13L10 14z" fill="#fff" stroke="#111"/></svg></button>
        <button class="tool" aria-label="Achsensystem"><svg viewBox="0 0 22 22"><path d="M9 14V2M7 4L9 1L11 4M9 14H21M18 12L21 14L18 16M9 14L2 21M2 17V21H6" fill="none" stroke="#22226a" stroke-width="1"/><path d="M9 12V5M10 13H17" stroke="#c8b020"/></svg></button>
        <button class="tool more" aria-label="Raster"><svg viewBox="0 0 22 22"><path d="M2 3H20M2 8H20M2 13H20M2 18H20M4 1V20M9 1V20M14 1V20M19 1V20" stroke="#2a6cc8" stroke-width="1"/></svg></button>
        <button class="tool more" aria-label="Arbeitsebene"><svg viewBox="0 0 22 22"><path d="M5 4L8 1H18V17L15 20H5z" fill="#49e6ff" stroke="#111"/><path d="M15 5L18 2V17L15 20z" fill="#178a90" stroke="#111"/><path d="M5 9H4L1 14H17L21 5H18" fill="none" stroke="#18a0a0"/><path d="M5 5H15" stroke="#111"/></svg></button>
        <button class="tool" aria-label="Nur aktueller Körper"><svg viewBox="0 0 22 22"><path d="M2 4H9V7H2zM14 15H20V18H14z" fill="#dff" stroke="#11e"/><path d="M6 7V10H9M10 18H14" stroke="#11e" fill="none"/><path d="M12 7L8 14H11L9 20L15 12H12L14 7z" fill="#b01010"/></svg></button>
        <button class="tool more" aria-label="Geometrisches Set"><svg viewBox="0 0 22 22"><path d="M1 4Q6 0 14 3M1 4L4 7L2 14" fill="none" stroke="#118" stroke-width="1" stroke-dasharray="2 1"/><path d="M6 15Q6 5 14 5Q20 6 20 13L17 19Q13 12 7 16z" fill="#ff0" stroke="#111"/></svg></button>
        <button class="tool more" aria-label="Katalogbrowser"><svg viewBox="0 0 22 22"><path d="M1 11L11 2L20 6L11 16z" fill="#cfe4f8" stroke="#11d"/><path d="M1 11V15L11 20L20 10V6M1 13L11 18L20 8" fill="none" stroke="#1a60c0" stroke-width="1"/></svg></button>
        <svg class="ds-logo" viewBox="0 0 40 32"><path d="M10 1Q19 0 18 4Q17 8 11 11Q16 5 15 3Q13 2 10 3z" fill="#e02030"/><text x="2" y="22" class="ds-d">D</text><text x="13" y="21" class="ds-s">S</text><text x="6" y="30" class="ds-name">CATIA</text></svg>
    </div>

    <div class="statusbar">
        <span>Fläche.11/Hauptkörper/2713_CKS(S1) ausgewählt</span>
        <input type="text" aria-label="Eingabebefehl">
        <button aria-label="Dialog"><svg viewBox="0 0 22 16"><path d="M5 4H11V9H5zM14 10V12" fill="none" stroke="#a0a0aa" stroke-width="1"/><path d="M3 14H18V2" fill="none" stroke="#a0a0aa" stroke-width="2"/></svg></button>
        <button aria-label="Info"><svg viewBox="0 0 22 16"><path d="M3 1H19V15H3z" fill="#b8b8c4" stroke="#777"/><circle cx="11" cy="7" r="6" fill="#fff" stroke="#111"/><path d="M11 3V5M9 7H11V11M9 11H13" stroke="#0a70e8" stroke-width="2" fill="none"/></svg></button>
    </div>

    <footer class="taskbar">
        <button class="orb" aria-label="Start"><svg viewBox="0 0 36 36"><circle cx="18" cy="18" r="17" fill="#195a86" stroke="#8fb4c8" stroke-width="2"/><path d="M3 24Q18 16 33 24Q28 34 18 34T3 24z" fill="#18b8ec"/><path d="M3 15Q8 2 18 2T33 15Q18 10 3 15z" fill="#8fb6cc"/><path d="M11 10Q14 8 18 10L16 17Q13 15 9 17z" fill="#f06830"/><path d="M20 11Q24 13 28 11L26 18Q22 19 18 18z" fill="#9cc838"/><path d="M8 19Q12 17 16 19L14 26Q10 24 6 26z" fill="#48a8f0"/><path d="M18 20Q22 22 26 20L24 27Q20 28 16 27z" fill="#fcc830"/></svg></button>
        <button class="task open stacked" aria-label="Explorer"><svg viewBox="0 0 18 18"><path d="M1 3H7L9 5H16V15H1z" fill="#f4dc80" stroke="#b09038"/><path d="M3 4H8" stroke="#5a5"/><path d="M4 17V11H14V17H11V14H7V17z" fill="#58b8f0" stroke="#e0f4ff"/></svg></button>
        <button class="task open" aria-label="Chrome"><svg viewBox="0 0 18 18"><circle cx="9" cy="9" r="8" fill="#ffd52e"/><path d="M2 5Q5 1 9 1T16 5L9 6L6 11z" fill="#e03a2c"/><path d="M2 5L7 12L10 17Q4 17 2 12T2 5z" fill="#38a850"/><circle cx="9" cy="9" r="4" fill="#3a7be0" stroke="#fff"/></svg></button>
        <button class="task" aria-label="SolidWorks"><svg viewBox="0 0 18 18"><path d="M1 4L6 1L17 3V14L13 17L1 15z" fill="#c81818"/><path d="M1 4L6 1L17 3L12 6z" fill="#f4f0f0"/><text x="2" y="14" class="sw">SW</text></svg></button>
        <button class="task" aria-label="Inventor"><svg viewBox="0 0 18 18"><path d="M1 1H17V17H1z" fill="#f4a040"/><path d="M1 1H17V5L1 14z" fill="#fbc888"/><text x="6" y="15" class="inv">I</text></svg></button>
        <button class="task" aria-label="CATIA Dienst"><svg viewBox="0 0 18 18"><path d="M1 1H17V17H1z" fill="#050505"/><path d="M2 6L7 3L9 8L4 12M9 2L13 5M3 3L11 11" stroke="#fff" fill="none"/><path d="M10 9Q13 12 11 17" stroke="#3a9ae8" stroke-width="3" fill="none"/><path d="M13 6L15 11" stroke="#e0702a" stroke-width="3"/></svg></button>
        <button class="task" aria-label="AutoCAD"><svg viewBox="0 0 18 18"><path d="M1 1H17V10H1z" fill="#d4d4d4"/><path d="M1 10H17V17H1z" fill="#e00000"/><text x="5" y="10" class="acad">A</text></svg></button>
        <button class="task open current" aria-label="CATIA V5"><svg viewBox="0 0 16 16"><use href="#catia"/></svg></button>
        <div class="tray">
            <span class="lang">PL</span>
            <svg viewBox="0 0 18 18"><path d="M2 8H16V15H2z" fill="#888" stroke="#ccc"/><path d="M4 10H14M4 13H14" stroke="#eee" stroke-dasharray="1 1"/><path d="M8 7Q9 3 14 4" fill="none" stroke="#ccc"/></svg>
            <svg viewBox="0 0 18 18"><path d="M5 12L9 8L13 12z" fill="#e8f0ff"/></svg>
            <svg viewBox="0 0 18 18"><path d="M3 2V17" stroke="#fff" stroke-width="1"/><path d="M4 3Q8 1 10 4H16L15 10H10Q8 8 4 9z" fill="#fff"/></svg>
            <svg viewBox="0 0 18 18"><path d="M5 4H10V15H5z" fill="#888" stroke="#fff"/><path d="M12 2V6M15 2V6M10 6H17V9L14 12V17" fill="#fff" stroke="#fff"/><path d="M3 9L10 16M10 9L3 16" stroke="#f01010" stroke-width="3"/></svg>
            <svg viewBox="0 0 18 18"><path d="M2 14H4V15H2zM5 12H7V15H5zM8 10H10V15H8zM11 7H13V15H11zM14 4H16V15H14z" fill="#fff"/></svg>
            <svg viewBox="0 0 18 18"><path d="M2 7H4L8 3V15L4 11H2z" fill="#fff"/><path d="M10 6Q12 9 10 12M12 5Q15 9 12 13M14 4Q18 9 14 14" stroke="#fff" fill="none"/></svg>
            <span class="clock">18:57</span>
            <button class="show-desktop" aria-label="Desktop anzeigen"></button>
        </div>
    </footer>
</body>
</html>
```
FILE: styles.css
```css
* {
    box-sizing: border-box;
}

body {
    margin: 0;
    height: 100vh;
    display: flex;
    flex-direction: column;
    overflow: hidden;
    background: #cfcfe6;
    color: #111;
    font-family: "Open Sans", "Noto Sans", sans-serif;
    font-size: 12px;
}

button {
    border: none;
    background: none;
    padding: 0;
    font: inherit;
    color: inherit;
}

.defs {
    position: absolute;
    width: 0;
    height: 0;
}

.app-icon {
    width: 16px;
    height: 16px;
}

/* title bar */
.titlebar {
    flex: none;
    height: 21px;
    display: flex;
    align-items: center;
    gap: 3px;
    border-bottom: 1px solid #c8c8c8;
    background: linear-gradient(115deg, #858585 0 20%, #6c6c6c 24% 38%, #7c7c7c 42% 50%, #686868 54% 60%, #7a7a7a 64% 78%, #6e6e6e 82%, #848484);
}

.title {
    padding: 0 4px 0 2px;
    border-radius: 8px;
    background: rgba(200, 200, 200, .45);
    box-shadow: 0 0 8px 4px rgba(200, 200, 200, .45);
    line-height: 14px;
    font-family: "Noto Sans", "Open Sans", sans-serif;
    font-size: 12px;
}

.window-buttons {
    align-self: flex-start;
    display: flex;
    margin-left: auto;
    margin-right: 3px;
    border: 1px solid #333;
    border-top: none;
    border-radius: 0 0 5px 5px;
    overflow: hidden;
    box-shadow: 0 0 1px 1px #aaa;
}

.window-buttons button {
    width: 27px;
    height: 17px;
    display: grid;
    place-items: center;
    border-right: 1px solid #333;
    background: linear-gradient(#aaa, #8a8a8a 45%, #555 50%, #777);
}

.window-buttons .close {
    width: 47px;
    border-right: none;
    background: linear-gradient(#e0a090, #cc6650 45%, #a82810 50%, #d06040);
}

.window-buttons svg {
    width: 14px;
    height: 12px;
}

/* menu */
.menubar {
    flex: none;
    height: 21px;
    display: flex;
    align-items: center;
    padding-left: 1px;
    border-top: 1px solid #444;
    font-size: 11px;
}

.menubar > button {
    height: 20px;
    padding: 0 12px 2px;
}

.menubar > .active {
    margin-right: -4px;
    padding-left: 11px;
    padding-right: 16px;
    background: #ffe3b3;
}

.menubar > .vpm {
    padding-right: 9px;
}

.mdi-buttons {
    display: flex;
    gap: 1px;
    margin-left: auto;
    margin-right: 1px;
}

.mdi-buttons button {
    width: 18px;
    height: 18px;
    display: grid;
    place-items: center;
    border: 1px solid #9fb4c8;
    background: #dceaf8;
}

.mdi-buttons svg {
    width: 12px;
    height: 12px;
}

/* toolbars */
.toolbar {
    flex: none;
    height: 38px;
    display: flex;
    align-items: flex-start;
    padding-top: 5px;
    border-bottom: 2px solid #555560;
    background: linear-gradient(#fff 0, #fff 8%, #e0e0f0 20%, #cfcfe6 40%, #cfcfe6 70%, #9c9cb4);
}

.toolbar.bottom {
    padding-top: 6px;
    border-bottom-width: 1px;
}

.grip {
    flex: none;
    width: 3px;
    height: 17px;
    margin: -2px 6px 0 9px;
    border-left: 2px solid #fff;
    border-right: 1px solid #999;
}

.grip:first-child {
    margin-left: 6px;
}

.grip.wide {
    margin-left: 16px;
}

.tool {
    position: relative;
    flex: none;
    width: 28px;
    height: 28px;
    padding: 3px;
    text-align: left;
}

.tool svg {
    display: block;
    width: 22px;
    height: 22px;
    overflow: visible;
}

.toolbar .more {
    width: 31px;
}

.toolbar .slim {
    width: 22px;
}

.more::after,
.arrow {
    content: "";
    position: absolute;
    left: 22px;
    top: 24px;
    border: 4px solid transparent;
    border-top-color: #000;
    border-bottom: none;
}

.combos {
    display: flex;
    gap: 4px;
    padding: 3px 0 0 1px;
    margin-right: 2px;
}

.combo {
    position: relative;
    width: 63px;
    height: 22px;
    border: 2px solid;
    border-color: #777 #f0f0f0 #f0f0f0 #777;
    background: #fff;
}

.combo.small {
    width: 40px;
}

.combo select {
    appearance: none;
    display: block;
    width: 100%;
    height: 18px;
    padding: 0 2px;
    border: none;
    background: none;
    color: #111;
    font: 11px "Open Sans", sans-serif;
    line-height: 16px;
}

.combo::before {
    content: "";
    position: absolute;
    right: 0;
    top: 0;
    width: 16px;
    height: 18px;
    border: 1px solid;
    border-color: #fff #666 #666 #fff;
    background: #ececec;
}

.combo::after {
    content: "";
    position: absolute;
    right: 4px;
    top: 8px;
    border: 4px solid transparent;
    border-top-color: #000;
    border-bottom: none;
}

.combo.off {
    background: #efefef;
}

.combo.off::after {
    border-top-color: #999;
}

.swatch {
    position: absolute;
    left: 4px;
    top: 1px;
    width: 34px;
    height: 16px;
    border: 1px solid #888;
    background: #f2fca8;
}

.line {
    position: absolute;
    left: 5px;
    top: 9px;
    width: 37px;
    border-top: 1px solid #000;
}

.line.thick {
    border-top-width: 2px;
}

.mark {
    position: absolute;
    left: 3px;
    top: 3px;
    width: 12px;
    height: 12px;
}

/* workspace */
.workspace {
    flex: 1;
    min-height: 0;
    display: flex;
}

.viewport {
    position: relative;
    flex: 1;
    display: flex;
    border-left: 2px solid #999;
    background: linear-gradient(#333366, #3c3c6c 30%, #454575 66%, #58587f 74%, #8b8ba8 90%, #adadc1);
}

.scroller {
    width: 11px;
    display: flex;
    flex-direction: column;
    justify-content: space-between;
    background: #7a7aff;
}

.scroller button {
    height: 12px;
    border: solid #d0d0ff;
    border-width: 0 0 1px;
    font-family: "DejaVu Sans", sans-serif;
    font-size: 8px;
    line-height: 11px;
    color: #000;
}

.scroller button:last-child {
    border-width: 1px 0 0;
    border-color: #202070;
}

.scene {
    position: absolute;
    left: -2px;
    top: 0;
    width: calc(100% + 2px);
    height: 100%;
}

.edge {
    fill: none;
}

.edge,
.outlined {
    stroke: #050505;
    stroke-width: 2px;
    vector-effect: non-scaling-stroke;
}

.axis {
    fill: none;
    stroke: #fff;
    stroke-width: 1px;
    vector-effect: non-scaling-stroke;
}

.engraving {
    font-family: Roboto, sans-serif;
    font-weight: bold;
    fill: #c2c1ec;
    stroke: #111;
    stroke-width: 2px;
    filter: drop-shadow(-2px 0 0 #333344);
}

.e1 { font-size: 48px; }
.e2 { font-size: 42px; }
.e3 { font-size: 34px; }
.e4 { font-size: 28px; }

.compass-label {
    fill: #ffee00;
    font-size: 11px;
}

.axis-label {
    fill: #fff;
    font-size: 13px;
}

/* specification tree */
.tree,
.tree ul {
    position: relative;
    margin: 0;
    padding: 0;
    list-style: none;
}

.tree {
    margin-left: 1px;
    color: #fff;
    font-family: "Noto Sans", "Open Sans", sans-serif;
    font-size: 19px;
}

.tree ul {
    padding-left: 28px;
}

.tree li {
    position: relative;
}

.tree ul > li::before {
    content: "";
    position: absolute;
    left: -16px;
    top: 17px;
    width: 15px;
    border-top: 2px solid #fff;
}

.tree ul > li::after {
    content: "";
    position: absolute;
    left: -18px;
    top: -8px;
    bottom: 0;
    border-left: 2px solid #fff;
}

.tree ul > li:last-child::after {
    bottom: auto;
    height: 27px;
}

.row {
    height: 39px;
    display: flex;
    gap: 4px;
}

.row svg {
    position: relative;
    z-index: 1;
    flex: none;
    width: 32px;
    height: 32px;
}

.row span {
    align-self: flex-start;
    margin-top: 7px;
    padding: 0 1px;
    border-radius: 2px;
    background: #343466;
    line-height: 30px;
    white-space: nowrap;
}

.row .edited {
    padding: 0;
    border: 1px solid #fff;
    background: #0066ff;
    line-height: 27px;
}

.row .selected {
    background: #ff8400;
}

.row .current {
    text-decoration: underline;
}

.row .bare {
    padding-left: 0;
}

.handle {
    position: absolute;
    z-index: 1;
    left: -26px;
    top: 9px;
    width: 17px;
    height: 17px;
    border-radius: 50%;
    background: radial-gradient(circle at 35% 30%, #f0f0f0, #a0a0a0 50%, #666);
    color: #000;
    font-size: 18px;
    font-weight: bold;
    line-height: 16px;
    text-align: center;
}

.cube-letter {
    font: bold 19px "Liberation Sans", sans-serif;
}

/* right toolbars */
.sidebar {
    display: flex;
    width: 77px;
    border-left: 2px solid #fff;
    background: linear-gradient(90deg, #fff, #cfcfe6 9px, #cfcfe6 calc(100% - 8px), #9c9cb4);
}

.column {
    flex: none;
    width: 40px;
    padding-left: 3px;
}

.column + .column {
    width: 35px;
}

.column .tool {
    display: block;
}

.column .more {
    height: 30px;
}

.column .grip {
    display: block;
    width: 16px;
    height: 3px;
    margin: 9px 0 6px -1px;
    border: solid #999;
    border-width: 0 0 1px;
    border-top: 2px solid #fff;
}

.column .grip:first-child {
    margin-top: 4px;
}

.column .grip.top {
    margin-top: 12px;
}

.column .grip.far {
    margin-top: 20px;
}

.column .grip.farther {
    margin-top: 24px;
}

.column hr {
    margin: 3px 0;
    border: none;
    border-top: 1px solid #999;
    border-bottom: 1px solid #fff;
}

.mini {
    font: 9px "Liberation Sans", sans-serif;
    fill: #1212c0;
}

.fx {
    font: italic 18px "Liberation Serif", serif;
}

.fx-arg {
    font: bold 11px "Liberation Serif", serif;
}

.ds-logo {
    width: 40px;
    height: 32px;
    margin: -4px 7px 0 auto;
}

.ds-d {
    font: italic bold 14px "Liberation Sans", sans-serif;
    fill: #40308c;
}

.ds-s {
    font: italic bold 16px "Liberation Sans", sans-serif;
    fill: #f4a010;
}

.ds-name {
    font: italic bold 10px "Liberation Sans", sans-serif;
    fill: #40308c;
}

/* status bar */
.statusbar {
    flex: none;
    height: 25px;
    display: flex;
    align-items: center;
    padding-left: 3px;
    border-bottom: 1px solid #333;
    font-size: 11px;
}

.statusbar span {
    padding-bottom: 2px;
    font-family: "Noto Sans", "Open Sans", sans-serif;
}

.statusbar input {
    width: 299px;
    height: 20px;
    margin-left: auto;
    border: 2px solid;
    border-color: #777 #eee #eee #777;
    background: #fff;
}

.statusbar button {
    width: 34px;
    height: 22px;
    display: grid;
    place-items: center;
    border: 2px solid;
    border-color: #f4f4ff #888 #888 #f4f4ff;
}

.statusbar button svg {
    width: 22px;
    height: 16px;
}

/* taskbar */
.taskbar {
    flex: none;
    height: 29px;
    display: flex;
    align-items: center;
    gap: 4px;
    padding-left: 60px;
    border-top: 1px solid #999;
    background: linear-gradient(65deg, #4e4e4e, #707070 14%, #787878 28%, #6a6a6a 44%, #7a7a7a 58%, #6c6c6c 70%, #777 80%, #585858 86%, #505050);
}

.orb {
    position: absolute;
    left: 9px;
    bottom: -2px;
    width: 36px;
    height: 36px;
}

.orb svg {
    width: 36px;
    height: 36px;
}

.task {
    width: 42px;
    height: 28px;
    display: grid;
    place-items: center;
    border-radius: 2px;
}

.task svg {
    width: 18px;
    height: 18px;
}

.task.open {
    border: 1px solid #ccc;
    background: linear-gradient(150deg, #aaa, #777 60%, #8a8a8a);
}

.task.stacked {
    border-right: 4px double #ccc;
}

.task.current {
    background: linear-gradient(150deg, #ddd, #b0b0b0 60%, #ccc);
}

.sw {
    font: bold 8px "Liberation Sans", sans-serif;
    fill: #fff;
}

.inv {
    font: bold 16px "Liberation Serif", serif;
    fill: #6a2c08;
}

.acad {
    font: bold 11px "Liberation Sans", sans-serif;
}

.tray {
    align-self: stretch;
    display: flex;
    align-items: center;
    gap: 6px;
    margin-left: auto;
    padding-bottom: 1px;
    color: #fff;
}

.tray svg {
    width: 18px;
    height: 18px;
}

.lang {
    margin-right: 2px;
    padding-bottom: 4px;
    font-size: 11px;
}

.clock {
    margin: 0 22px 0 26px;
    font-size: 11px;
}

.show-desktop {
    align-self: stretch;
    width: 14px;
    border: 1px solid #aaa;
    background: linear-gradient(150deg, #999, #444);
}
```
